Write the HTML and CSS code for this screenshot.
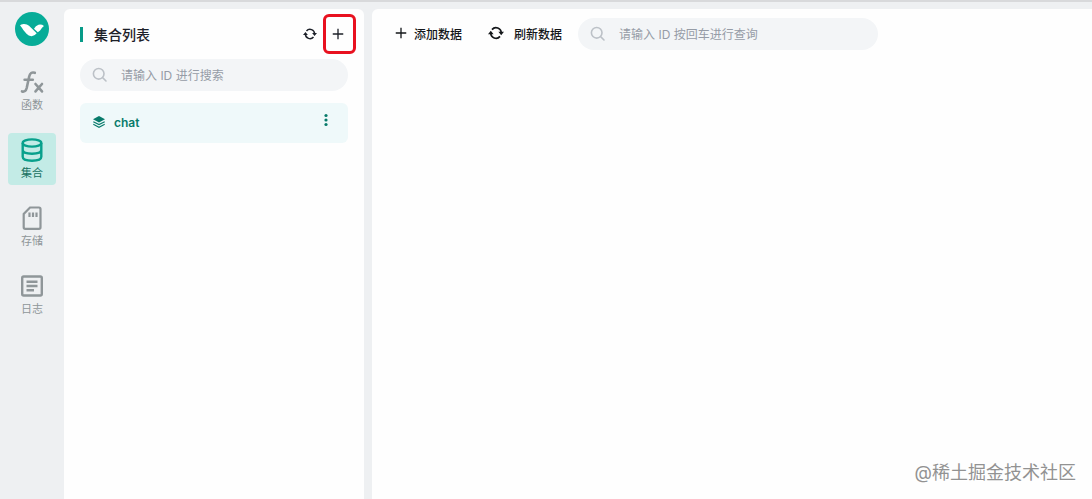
FILE: index.html
```
<!DOCTYPE html>
<html lang="zh-CN">
<head>
  <meta charset="UTF-8" />
  <title>集合</title>
  <link rel="stylesheet" href="styles.css">
</head>
<body>
  <!-- shared icons -->
  <svg class="defs" width="0" height="0" aria-hidden="true">
    <symbol id="icon-refresh" viewBox="0 0 16 16">
      <path d="M4 4.600A5.200 5.200 0 0 1 13.200 8M12 11.400A5.200 5.200 0 0 1 2.800 8" fill="none" stroke="currentColor" stroke-width="1.700"/>
      <path d="M0 9.200L2.800 5.800L5.600 9.200ZM16 6.800L13.200 10.200L10.400 6.800Z" fill="currentColor"/>
    </symbol>
    <symbol id="icon-plus" viewBox="0 0 16 16">
      <path d="M8 2V14M2 8H14" fill="none" stroke="currentColor" stroke-width="1.500"/>
    </symbol>
    <symbol id="icon-search" viewBox="0 0 16 16">
      <path d="M12 6.800A5.300 5.300 0 1 1 1.400 6.800A5.300 5.300 0 0 1 12 6.800ZM10.600 10.600L14 14" fill="none" stroke="currentColor" stroke-width="1.600" stroke-linecap="round"/>
    </symbol>
  </svg>

  <nav class="sidebar">
    <a class="logo" href="#" aria-label="首页">
      <svg width="34" height="34" viewBox="0 0 34 34">
        <circle cx="17" cy="17" r="17" fill="#07ac98"/>
        <path d="M5 13.300Q6 12 8.500 11.900Q12 11.700 14 13.700L21.700 21.300Q19.500 24.300 16.500 24.200Q13.500 24 11.500 21.800L8.300 18Q7 15.800 5 13.300Z" fill="#fff"/>
        <path d="M29 14Q26.500 12 23.500 12.800Q20.500 13.700 19 16.700L22.800 20.300Q25.500 18.500 26.500 16.500Q27.300 15 29 14Z" fill="#fff"/>
      </svg>
    </a>
    <a class="nav-item" href="#">
      <svg width="24" height="24" viewBox="0 0 24 24" fill="none" stroke="currentColor" stroke-width="2.600" stroke-linecap="round">
        <path d="M2 21.400Q5.600 22.400 6.700 18L9.200 6.500Q10.300 1.400 14.800 2.800M4.600 9.800H12.800M15.500 14L22 21.400M22 14L15.500 21.400"/>
      </svg>
      <span>函数</span>
    </a>
    <a class="nav-item active" href="#">
      <svg width="24" height="24" viewBox="0 0 24 24" fill="none" stroke="currentColor" stroke-width="2.400">
        <ellipse cx="12" cy="5" rx="9.300" ry="3.600"/>
        <path d="M2.700 5V18.700C2.700 24 21.300 24 21.300 18.700V5M2.700 11.700C2.700 17 21.300 17 21.300 11.700"/>
      </svg>
      <span>集合</span>
    </a>
    <a class="nav-item" href="#">
      <svg width="24" height="24" viewBox="0 0 24 24" fill="none" stroke="currentColor" stroke-width="2.200">
        <path d="M10 1.500H19Q20.500 1.500 20.500 3V21.300Q20.500 22.800 19 22.800H5.200Q3.700 22.800 3.700 21.300V8Z"/>
        <path d="M9.500 6.500V11M13 6.500V11M16.500 6.500V11"/>
      </svg>
      <span>存储</span>
    </a>
    <a class="nav-item" href="#">
      <svg width="24" height="24" viewBox="0 0 24 24" fill="none" stroke="currentColor" stroke-width="2.400">
        <rect x="2.200" y="2.500" width="19.600" height="19" rx="1.500"/>
        <path d="M6.500 7.700H17.500M6.500 12H17.500M6.500 16.300H14"/>
      </svg>
      <span>日志</span>
    </a>
  </nav>

  <section class="panel collections">
    <header class="panel-header">
      <h2>集合列表</h2>
      <button class="icon-btn" type="button" aria-label="刷新"><svg width="14" height="14"><use href="#icon-refresh"/></svg></button>
      <button class="icon-btn marked" type="button" aria-label="新建集合"><svg width="14" height="14"><use href="#icon-plus"/></svg></button>
    </header>
    <label class="search">
      <svg width="16" height="16"><use href="#icon-search"/></svg>
      <input type="text" aria-label="搜索集合" placeholder="请输入 ID 进行搜索" />
    </label>
    <div class="collection">
      <svg width="12" height="14" viewBox="0 0 12 14">
        <path d="M6 1L12 4.200L6 7.400L0 4.200Z" fill="currentColor"/>
        <path d="M.3 6.700L6 9.600L11.700 6.700M.3 9.300L6 12.300L11.700 9.300" fill="none" stroke="currentColor" stroke-width="1.100"/>
      </svg>
      <a href="#">chat</a>
      <button class="more" type="button" aria-label="更多">
        <svg width="4" height="14" viewBox="0 0 4 14" fill="currentColor"><circle cx="2" cy="2.500" r="1.600"/><circle cx="2" cy="7" r="1.600"/><circle cx="2" cy="11.500" r="1.600"/></svg>
      </button>
    </div>
  </section>

  <main class="panel records">
    <div class="toolbar">
      <button class="tool" type="button"><svg width="14" height="14"><use href="#icon-plus"/></svg>添加数据</button>
      <button class="tool reload" type="button"><svg width="16" height="16"><use href="#icon-refresh"/></svg>刷新数据</button>
      <label class="search">
        <svg width="16" height="16"><use href="#icon-search"/></svg>
        <input type="text" aria-label="查询数据" placeholder="请输入 ID 按回车进行查询" />
      </label>
    </div>
    <footer class="watermark">@稀土掘金技术社区</footer>
  </main>
</body>
</html>
```

FILE: styles.css
```
* { box-sizing: border-box; }
body { margin: 0; height: 100vh; display: flex; gap: 8px; padding-top: 7px; border-top: 2px solid #d8d9db; background: #eef0f2; color: #1d2129; font-family: Inter, "Noto Sans CJK SC", sans-serif; font-size: 12px; }
a { color: inherit; text-decoration: none; }
button { padding: 0; border: none; background: none; color: inherit; font: inherit; cursor: pointer; }
svg { display: block; flex: none; }
.defs { position: absolute; }

.sidebar { width: 56px; padding: 3px 0 0 8px; display: flex; flex-direction: column; gap: 16px; }
.logo { align-self: center; margin-bottom: 3px; }
.nav-item { height: 52px; padding-top: 5px; display: flex; flex-direction: column; align-items: center; gap: 3px; border-radius: 4px; color: #8f9699; font-size: 11px; line-height: 16px; }
.nav-item.active { background: #c3ebe6; color: #08a08c; }
.nav-item.active span { color: #16705f; }

.panel { background: #fefefe; border-radius: 6px 6px 0 0; }
.collections { width: 300px; padding: 9px 16px; }
.panel-header { height: 32px; margin-bottom: 9px; display: flex; align-items: center; }
.panel-header h2 { flex: 1; margin: 0; display: flex; align-items: center; gap: 11px; font-size: 14px; font-weight: 500; }
.panel-header h2::before { content: ""; width: 3px; height: 15px; background: #079b88; }
.icon-btn { width: 20px; height: 28px; margin-left: 8px; display: flex; align-items: center; justify-content: center; position: relative; }
.marked::after { content: ""; position: absolute; inset: -6px -8px -6px -5px; border: 3px solid #e8111f; border-radius: 6px; }

.search { height: 32px; padding: 0 12px; display: flex; align-items: center; gap: 13px; border-radius: 16px; background: #f3f5f7; color: #bcc1c7; }
.search input { flex: 1; min-width: 0; padding: 0; border: none; outline: none; background: none; color: #1d2129; font: inherit; }
.search input::placeholder { color: #969ca6; }

.collection { height: 40px; margin-top: 12px; padding: 0 16px 2px 13px; display: flex; align-items: center; gap: 9px; border-radius: 6px; background: #eff9fa; color: #087b6b; }
.collection a { flex: 1; font-weight: 600; }
.more { width: 12px; height: 20px; margin-bottom: 4px; display: flex; align-items: center; justify-content: center; }

.records { flex: 1; padding: 9px 16px 14px 22px; display: flex; flex-direction: column; justify-content: space-between; border-top-right-radius: 0; }
.toolbar { display: flex; align-items: center; gap: 26px; }
.tool { padding-bottom: 2px; display: flex; align-items: center; gap: 6px; color: #14171a; font-weight: 500; }
.tool.reload { margin-right: -10px; gap: 10px; }
.toolbar .search { width: 300px; }
.watermark { align-self: flex-end; color: #929292; font-size: 18px; line-height: 24px; text-shadow: 1px 1px 1px #fff; }
```
